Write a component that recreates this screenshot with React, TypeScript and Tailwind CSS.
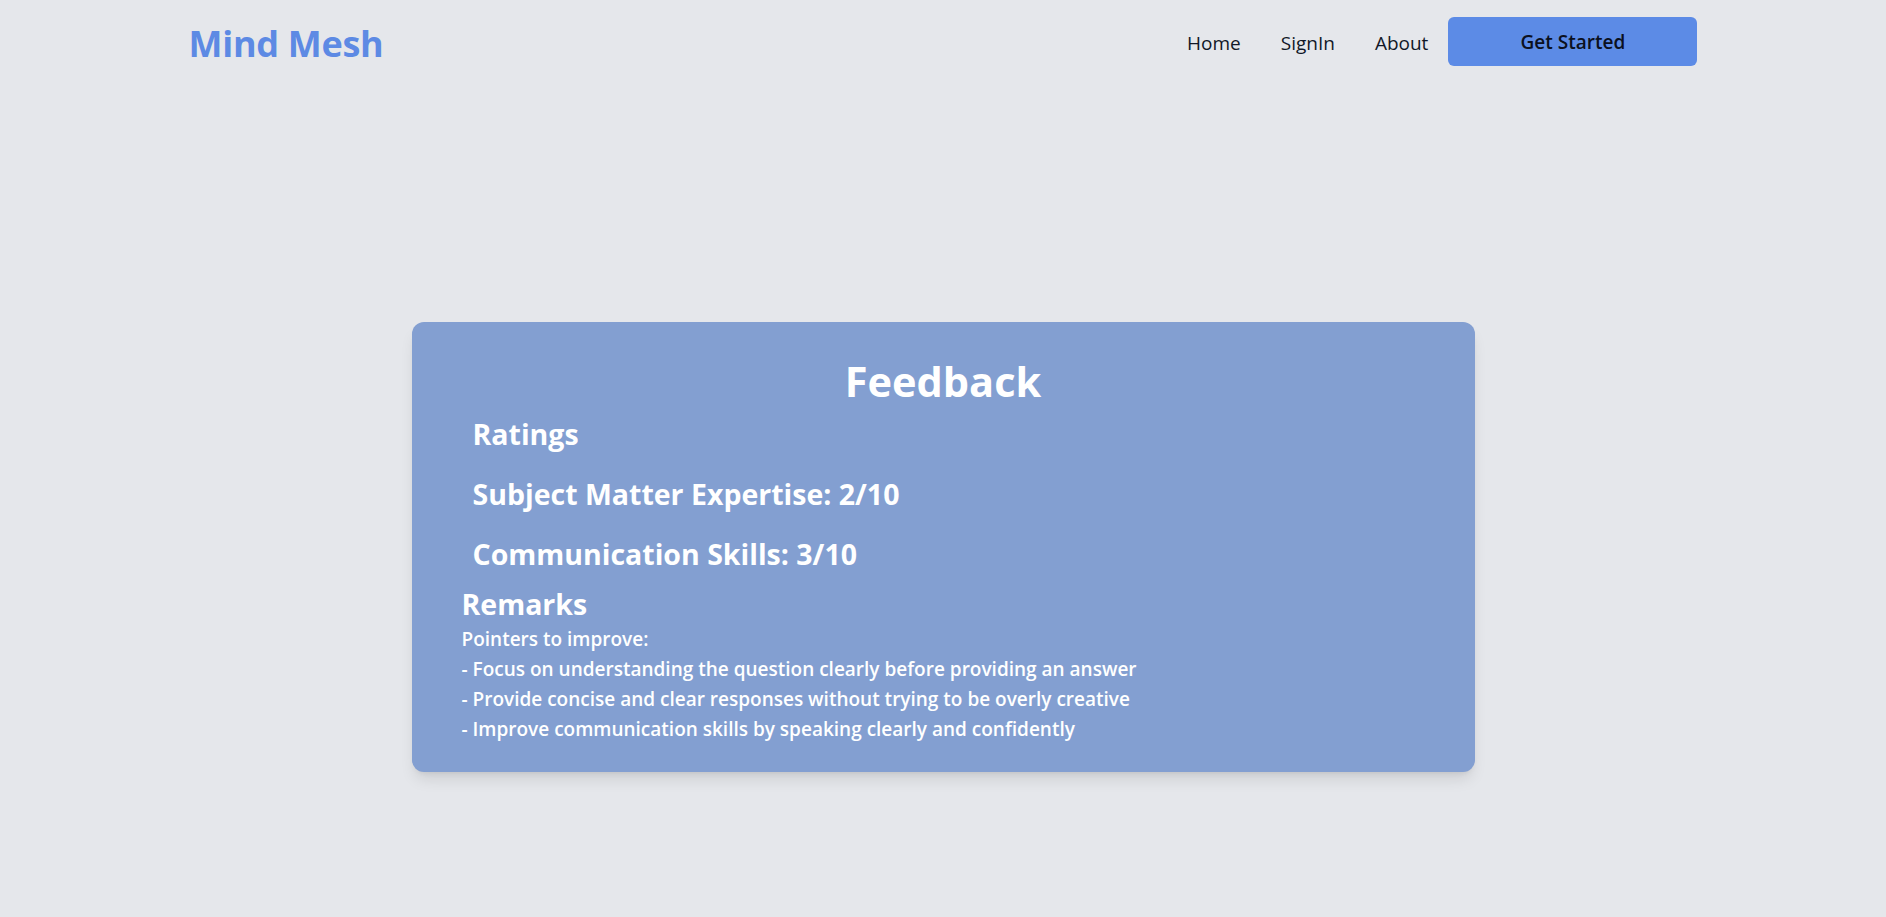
import React from "react";

export default function App() {
  return (
    <div className="min-h-screen w-full bg-[#e5e7eb] font-['Open_Sans',sans-serif]">
      <nav className="mx-auto flex h-[83px] w-4/5 items-start justify-between pt-[17px]">
        <div className="mt-[2px] text-[36px] font-bold leading-[49px] tracking-[-0.3px] text-[#5d8ae4]">Mind Mesh</div>
        <div className="flex items-center">
          <div className="flex items-center pt-[3px] text-[19px] leading-[28px] text-[#111827]">
            <a>Home</a>
            <a className="ml-[40px]">SignIn</a>
            <a className="ml-[40px]">About</a>
          </div>
          <button className="ml-[20px] flex h-[49px] w-[249px] items-center justify-center rounded-md bg-[#5c8be6] pt-[2px] text-[19px] font-semibold text-[#0b1020]">
            Get Started
          </button>
        </div>
      </nav>
      <div className="mx-auto mt-[239px] w-[1063px] rounded-xl bg-[#839fd1] px-[50px] pb-[28px] pt-[39px] text-white shadow-lg">
        <h1 className="text-center text-[41.5px] font-bold leading-[40px]">Feedback</h1>
        <div className="pl-[11px]">
          <h2 className="mt-[17px] text-[28.5px] font-bold leading-[32px]">Ratings</h2>
          <h2 className="mt-[28px] text-[28.5px] font-bold leading-[32px]">Subject Matter Expertise: 2/10</h2>
          <h2 className="mt-[28px] text-[28.5px] font-bold leading-[32px]">Communication Skills: 3/10</h2>
        </div>
        <h2 className="mt-[18px] text-[28.5px] font-bold leading-[32px]">Remarks</h2>
        <div className="mt-[4px] text-[19px] font-semibold leading-[30px]">
          <p>Pointers to improve:</p>
          <p>- Focus on understanding the question clearly before providing an answer</p>
          <p>- Provide concise and clear responses without trying to be overly creative</p>
          <p>- Improve communication skills by speaking clearly and confidently</p>
        </div>
      </div>
    </div>
  );
}
